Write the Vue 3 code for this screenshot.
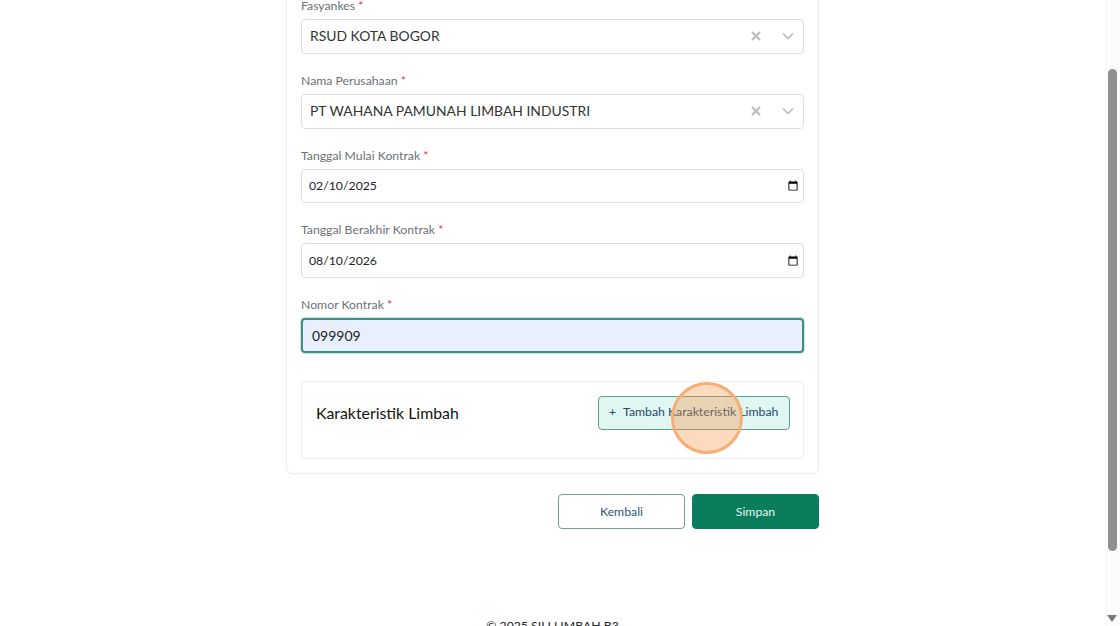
<script setup>
  const selects = [
    { label: 'Fasyankes', value: 'RSUD KOTA BOGOR' },
    { label: 'Nama Perusahaan', value: 'PT WAHANA PAMUNAH LIMBAH INDUSTRI' }
  ];

  const dates = [
    { label: 'Tanggal Mulai Kontrak', value: '2025-02-10' },
    { label: 'Tanggal Berakhir Kontrak', value: '2026-08-10' }
  ];
</script>

<template>
  <div class="page">
    <main class="content">
      <form class="card" @submit.prevent>
        <div v-for="item in selects" :key="item.label" class="field">
          <label>{{ item.label }} <span class="req">*</span></label>
          <div class="select">
            <span class="select-value">{{ item.value }}</span>
            <svg class="clear" width="10" height="10" viewBox="0 0 10 10">
              <path d="M1 1l8 8M9 1l-8 8" stroke="#bdbdbd" stroke-width="2.2" fill="none" />
            </svg>
            <svg class="chevron" width="12" height="8" viewBox="0 0 12 8">
              <path d="M1 1.5l5 5 5-5" stroke="#c4c4c4" stroke-width="1.8" fill="none" />
            </svg>
          </div>
        </div>

        <div v-for="item in dates" :key="item.label" class="field">
          <label>{{ item.label }} <span class="req">*</span></label>
          <input class="date" type="date" :value="item.value" />
        </div>

        <div class="field">
          <label>Nomor Kontrak <span class="req">*</span></label>
          <input class="text-focus" type="text" value="099909" />
        </div>

        <section class="traits">
          <h3>Karakteristik Limbah</h3>
          <button type="button" class="add-btn"><span class="plus">+</span>Tambah Karakteristik Limbah</button>
        </section>
      </form>

      <div class="actions">
        <button type="button" class="btn btn-outline">Kembali</button>
        <button type="button" class="btn btn-primary">Simpan</button>
      </div>

      <footer class="footer">© 2025 SILI LIMBAH B3</footer>

      <div class="click-marker"></div>
    </main>

    <aside class="scrollbar">
      <div class="thumb"></div>
      <div class="arrow"></div>
    </aside>
  </div>
</template>

<style scoped>
  .page {
    display: flex;
    height: 626px;
    overflow: hidden;
    background: #fff;
    font-family: Lato, "Open Sans", sans-serif;
  }

  .content {
    position: relative;
    flex: 1;
    display: flex;
    flex-direction: column;
    align-items: center;
    overflow: hidden;
  }

  .card {
    width: 533px;
    box-sizing: border-box;
    margin-top: -35px;
    padding: 30px 14px 14px;
    border: 1px solid #e9e9e9;
    border-radius: 6px;
    flex-shrink: 0;
  }

  .field {
    margin-bottom: 17px;
  }

  .field label {
    display: block;
    height: 20px;
    margin-bottom: 3px;
    font-size: 12.25px;
    line-height: 20px;
    color: #6c7177;
  }

  .req {
    color: #dc3545;
  }

  .select {
    display: flex;
    align-items: center;
    height: 34.75px;
    box-sizing: border-box;
    padding: 0 9px 0 8px;
    border: 1px solid #dedede;
    border-radius: 4px;
  }

  .select-value {
    flex: 1;
    margin-bottom: 2px;
    font-size: 13.9px;
    color: #333;
  }

  .clear {
    margin-right: 21px;
  }

  .date,
  .text-focus {
    display: block;
    width: 100%;
    height: 34.75px;
    box-sizing: border-box;
    border-radius: 4px;
    font-family: inherit;
  }

  .date {
    padding: 0 2px 0 7px;
    border: 1px solid #dedede;
    font-size: 12.25px;
    color: #212529;
    background: #fff;
  }

  .date::-webkit-datetime-edit-month-field,
  .date::-webkit-datetime-edit-day-field,
  .date::-webkit-datetime-edit-year-field {
    padding: 0;
  }

  .text-focus {
    padding: 0 9px;
    border: 2px solid #3f8f7f;
    background: #e8f0fe;
    font-size: 14px;
    color: #212529;
    outline: none;
    box-shadow: 0 0 0 1px #c9e6df;
  }

  .traits {
    display: flex;
    align-items: flex-start;
    justify-content: space-between;
    height: 78px;
    box-sizing: border-box;
    margin-top: 28px;
    padding: 14px 13px 28px 14px;
    border: 1px solid #efefef;
    border-radius: 4px;
  }

  .traits h3 {
    margin: 0;
    font-size: 15.85px;
    font-weight: 400;
    line-height: 34px;
    color: #111;
  }

  .add-btn {
    display: flex;
    align-items: center;
    width: 192px;
    height: 34px;
    padding: 0 0 2px 10px;
    border: 1px solid #5f9e90;
    border-radius: 4px;
    background: #e0f6f0;
    font-family: inherit;
    font-size: 12.25px;
    color: #1f4a70;
    white-space: nowrap;
  }

  .plus {
    margin-right: 7px;
  }

  .actions {
    display: flex;
    justify-content: flex-end;
    gap: 7px;
    width: 533px;
    margin-top: 20.5px;
    flex-shrink: 0;
  }

  .btn {
    width: 127px;
    height: 34.5px;
    padding: 0 0 1px;
    border-radius: 4px;
    font-family: inherit;
    font-size: 12.25px;
  }

  .btn-outline {
    border: 1px solid #6fa398;
    background: #fff;
    color: #2a5680;
  }

  .btn-primary {
    border: 1px solid #0a7d5c;
    background: #0a7d5c;
    color: #e8f5f0;
  }

  .footer {
    margin-top: 87px;
    font-size: 12.25px;
    line-height: 20px;
    color: #212529;
    flex-shrink: 0;
  }

  /* recorded click highlight, lies over the button */
  .click-marker {
    position: absolute;
    left: 671px;
    top: 382px;
    width: 72px;
    height: 72px;
    box-sizing: border-box;
    border: 3px solid #f4ae76;
    border-radius: 50%;
    background: rgba(247, 150, 70, 0.35);
  }

  .scrollbar {
    position: relative;
    width: 15px;
    background: #fbfbfb;
    flex-shrink: 0;
  }

  .thumb {
    width: 9px;
    height: 482px;
    margin: 69px 0 0 3px;
    border-radius: 5px;
    background: #8f8f8f;
  }

  .arrow {
    width: 0;
    height: 0;
    margin: 64px 0 0 2px;
    border-left: 5.5px solid transparent;
    border-right: 5.5px solid transparent;
    border-top: 7px solid #7a7a7a;
  }
</style>
